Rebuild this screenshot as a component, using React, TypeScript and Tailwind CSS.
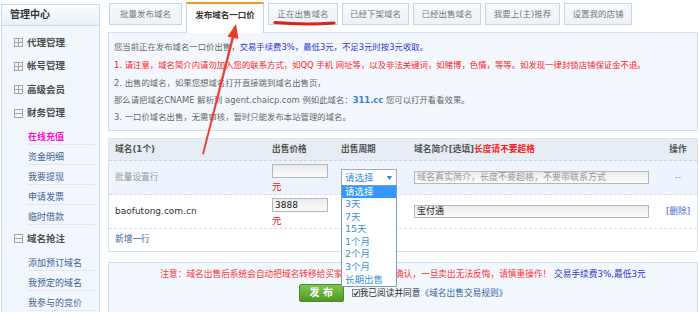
import React from "react";

function BoxIcon({ open }: { open: boolean }) {
  return (
    <svg width="9" height="9" viewBox="0 0 9 9" className="shrink-0">
      <rect x="0.5" y="0.5" width="8" height="8" fill="none" stroke="#a3a3a3" />
      <line x1="1" y1="4.5" x2="8" y2="4.5" stroke="#a3a3a3" />
      {!open && <line x1="4.5" y1="1" x2="4.5" y2="8" stroke="#a3a3a3" />}
    </svg>
  );
}

function Sec({ label, open = false, extra = "" }: { label: string; open?: boolean; extra?: string }) {
  return (
    <div className={"h-[23.5px] flex items-center pl-[12px] gap-[4px] " + extra}>
      <BoxIcon open={open} />
      <span className="text-[9.5px] font-bold text-[#4a4a4a] leading-[12px]">{label}</span>
    </div>
  );
}

function Sub({ label, active = false }: { label: string; active?: boolean }) {
  return (
    <div className="h-[20px] ml-[26px] mr-[4px] border-b border-[#dfe7f0] flex items-end pb-[1px]">
      <span
        className={
          "leading-[12px] text-[9px] " +
          (active ? "text-[#ff11cc] font-bold" : "text-[#3f6394]")
        }
      >
        {label}
      </span>
    </div>
  );
}

function Sidebar() {
  return (
    <div className="ml-[1px] mt-[4px] w-[99px] h-[320px] shrink-0 border border-[#c9dcee] bg-[#f1f7fd]">
      <div className="h-[21px] border-b border-[#c9dcee] bg-linear-to-b from-[#fbfdff] to-[#eaf1f8] flex items-center pl-[8px]">
        <span className="text-[10px] font-bold text-[#333] leading-[12px]">管理中心</span>
      </div>
      <div className="pt-[5px]">
        <Sec label="代理管理" />
        <Sec label="帐号管理" />
        <Sec label="高级会员" />
        <Sec label="财务管理" open extra="h-[21px]" />
        <Sub label="在线充值" active />
        <Sub label="资金明细" />
        <Sub label="我要提现" />
        <Sub label="申请发票" />
        <Sub label="临时借款" />
        <Sec label="域名抢注" open extra="mt-[2px] h-[22px]" />
        <Sub label="添加预订域名" />
        <Sub label="我预定的域名" />
        <Sub label="我参与的竞价" />
      </div>
    </div>
  );
}

const tabs = [
  { label: "批量发布域名", w: "w-[73px]" },
  { label: "发布域名一口价", w: "w-[78px]", active: true },
  { label: "正在出售域名", w: "w-[70px]" },
  { label: "已经下架域名", w: "w-[67px]" },
  { label: "已经出售域名", w: "w-[68px]" },
  { label: "我要上(主)推荐", w: "w-[75px]" },
  { label: "设置我的店铺", w: "w-[68px]" },
];

function Tabs() {
  return (
    <div className="h-[29px] mt-[3px] flex items-start gap-[4px] pl-[1px]">
      {tabs.map((t) =>
        t.active ? (
          <div
            key={t.label}
            className={
              t.w +
              " relative z-10 -mt-[1px] h-[31px] border border-b-0 border-[#c3d6ea] border-t-2 border-t-[#f7931e] bg-white flex justify-center pt-[5px]"
            }
          >
            <span className="text-[8.5px] leading-[12px] font-bold text-[#333]">{t.label}</span>
          </div>
        ) : (
          <div
            key={t.label}
            className={
              t.w +
              " h-[22px] border border-[#c3d6ea] bg-linear-to-b from-[#f7f9fb] to-[#eef2f7] flex items-center justify-center"
            }
          >
            <span className="text-[8.5px] leading-[12px] text-[#777]">{t.label}</span>
          </div>
        )
      )}
    </div>
  );
}

function InfoBox() {
  return (
    <div className="h-[99px] border border-[#cfdef0] bg-[#f4f8fe] pl-[5px] pt-[6px] text-[8.4px] text-[#666]">
      <div className="h-[17px] flex items-center whitespace-nowrap">
        <span>您当前正在发布域名一口价出售，</span>
        <span className="text-[#3333cc]">交易手续费3%，最低3元，不足3元时按3元收取。</span>
      </div>
      <div className="h-[18px] flex items-center whitespace-nowrap text-[#ff2222]">
        1. 请注意，域名简介内请勿加入您的联系方式，如QQ 手机 网址等，以及非法关键词，如赌博，色情，等等。如发现一律封锁店铺保证金不退。
      </div>
      <div className="h-[18px] flex items-center whitespace-nowrap">
        2. 出售的域名，如果您想域名打开直接跳到域名出售页，
      </div>
      <div className="h-[17px] flex items-center whitespace-nowrap">
        <span>那么请把域名CNAME 解析到 agent.chaicp.com 例如此域名：</span>
        <span className="text-[#3a7fd5] font-bold">311.cc</span>
        <span>&nbsp;您可以打开看看效果。</span>
      </div>
      <div className="h-[17px] flex items-center whitespace-nowrap">
        3. 一口价域名出售，无需审核，暂时只能发布本站管理的域名。
      </div>
    </div>
  );
}

function SelectBox() {
  return (
    <div className="w-[56px] h-[17px] border border-[#a5acb5] bg-white flex items-center justify-between pl-[3px] pr-[4px]">
      <span className="text-[9.5px] leading-[12px] text-[#3d8fd6]">请选择</span>
      <svg width="5" height="4" viewBox="0 0 5 4">
        <polygon points="0,0 5,0 2.5,4" fill="#3c7fc4" />
      </svg>
    </div>
  );
}

function TextInput({ value, placeholder }: { value?: string; placeholder?: string }) {
  return (
    <div className="w-[235px] h-[13px] border border-[#b7b7b7] bg-linear-to-b from-[#ececec] to-[#fbfbfb] flex items-center pl-[2px]">
      {value ? (
        <span className="text-[9px] leading-[11px] text-[#222]">{value}</span>
      ) : (
        <span className="text-[9px] leading-[11px] text-[#999]">{placeholder}</span>
      )}
    </div>
  );
}

function PriceCell({ value }: { value?: string }) {
  return (
    <div className="w-[69px] shrink-0 self-stretch flex flex-col pt-[3px]">
      <div className="w-[56px] h-[14px] shrink-0 border border-[#b7b7b7] bg-linear-to-b from-[#ececec] to-[#fafafa] flex items-center pl-[2px]">
        {value && <span className="text-[9px] leading-[11px] text-[#222]">{value}</span>}
      </div>
      <div className="mt-[3px] h-[12px] leading-[12px] text-[9.5px] text-[#ee1111]">元</div>
    </div>
  );
}

function Table() {
  return (
    <div className="mt-[7px] border border-[#d8e4f0] text-[8.7px]">
      <div className="h-[22px] bg-[#e6edf5] border-b border-dashed border-[#c8d4e2] flex items-center pl-[6px] font-bold text-[#555]">
        <div className="w-[157px]">域名(1个)</div>
        <div className="w-[69px]">出售价格</div>
        <div className="w-[73px]">出售周期</div>
        <div className="w-[245px]">
          域名简介[选填]<span className="text-[#ff2222]">长度请不要超格</span>
        </div>
        <div className="flex-1 text-center">操作</div>
      </div>
      <div className="h-[34px] bg-[#edf4fd] border-b border-dashed border-[#d5dee9] flex items-center pl-[6px]">
        <div className="w-[157px] text-[#999]">批量设置行</div>
        <PriceCell />
        <div className="w-[73px]">
          <SelectBox />
        </div>
        <div className="w-[245px]">
          <TextInput placeholder="域名真实简介，长度不要超格，不要带联系方式" />
        </div>
        <div className="flex-1 text-center text-[#999]">--</div>
      </div>
      <div className="h-[34px] bg-white border-b border-dashed border-[#d5dee9] flex items-center pl-[6px]">
        <div className="w-[157px] text-[#333] text-[9px]">baofutong.com.cn</div>
        <PriceCell value="3888" />
        <div className="w-[73px]" />
        <div className="w-[245px]">
          <TextInput value="宝付通" />
        </div>
        <div className="flex-1 text-center text-[#3366cc]">[删除]</div>
      </div>
      <div className="h-[22px] bg-white flex items-center pl-[6px] text-[#336699]">新增一行</div>
    </div>
  );
}

function Footer() {
  return (
    <div className="mt-[10px] h-[60px] border border-[#cfdef0] bg-[#f3f7fe] pt-[6px] text-[8.7px]">
      <div className="h-[12px] flex items-center justify-center whitespace-nowrap">
        <span className="text-[#ff3333]">
          注意：域名出售后系统会自动把域名转移给买家，请卖家仔细确认，一旦卖出无法反悔，请慎重操作！
        </span>
        <span className="text-[#3333cc]">&nbsp;交易手续费3%,最低3元</span>
      </div>
      <div className="mt-[3px] flex items-center justify-center">
        <div className="w-[45px] h-[18px] rounded-[2px] border border-[#4b8a25] bg-linear-to-b from-[#82c450] to-[#4f9a22] flex items-center justify-center">
          <span className="text-white font-bold text-[10px] leading-[12px]">发 布</span>
        </div>
        <div className="ml-[8px] w-[8px] h-[8px] border border-[#888] bg-[#eee] flex items-center justify-center">
          <svg width="7" height="7" viewBox="0 0 7 7">
            <polyline points="1,3.5 2.8,5.5 6,1" fill="none" stroke="#222" strokeWidth="1.3" />
          </svg>
        </div>
        <span className="text-[#333] leading-[12px]">我已阅读并同意</span>
        <span className="text-[#336699] leading-[12px]">《域名出售交易规则》</span>
      </div>
    </div>
  );
}

const options = ["3天", "7天", "15天", "1个月", "2个月", "3个月", "长期出售"];

export default function App() {
  return (
    <div className="relative w-[700px] h-[312px] overflow-hidden bg-white flex items-start [font-family:'DejaVu_Sans','Noto_Sans_CJK_SC',sans-serif] text-[#666]">
      <Sidebar />
      <div className="ml-[8px] flex-1 pr-[2px] [&>*]:shrink-0">
        <Tabs />
        <InfoBox />
        <Table />
        <Footer />
      </div>

      {/* open dropdown list */}
      <div className="absolute left-[341px] top-[185px] w-[56px] h-[102px] border border-[#7a9cc0] bg-white z-20">
        <div className="h-[12px] bg-[#3399ff] text-white text-[9.5px] leading-[12px] pl-[3px]">请选择</div>
        {options.map((o) => (
          <div key={o} className="h-[12.6px] text-[#3d8fd6] text-[9.5px] leading-[12.6px] pl-[3px]">
            {o}
          </div>
        ))}
      </div>

      {/* annotations */}
      <svg className="absolute left-0 top-0 z-30 pointer-events-none" width="700" height="312" viewBox="0 0 700 312">
        <path d="M275 22.5 Q304 25 334 23" fill="none" stroke="#e0201b" strokeWidth="3" strokeLinecap="round" />
        <polygon points="202.5,154 203.5,154 233.8,37 232.2,36.6" fill="#e53a2f" stroke="#e53a2f" strokeWidth="0.8" />
        <polygon points="236,24 238.5,39 227.5,36.5" fill="#e53a2f" />
      </svg>
    </div>
  );
}
